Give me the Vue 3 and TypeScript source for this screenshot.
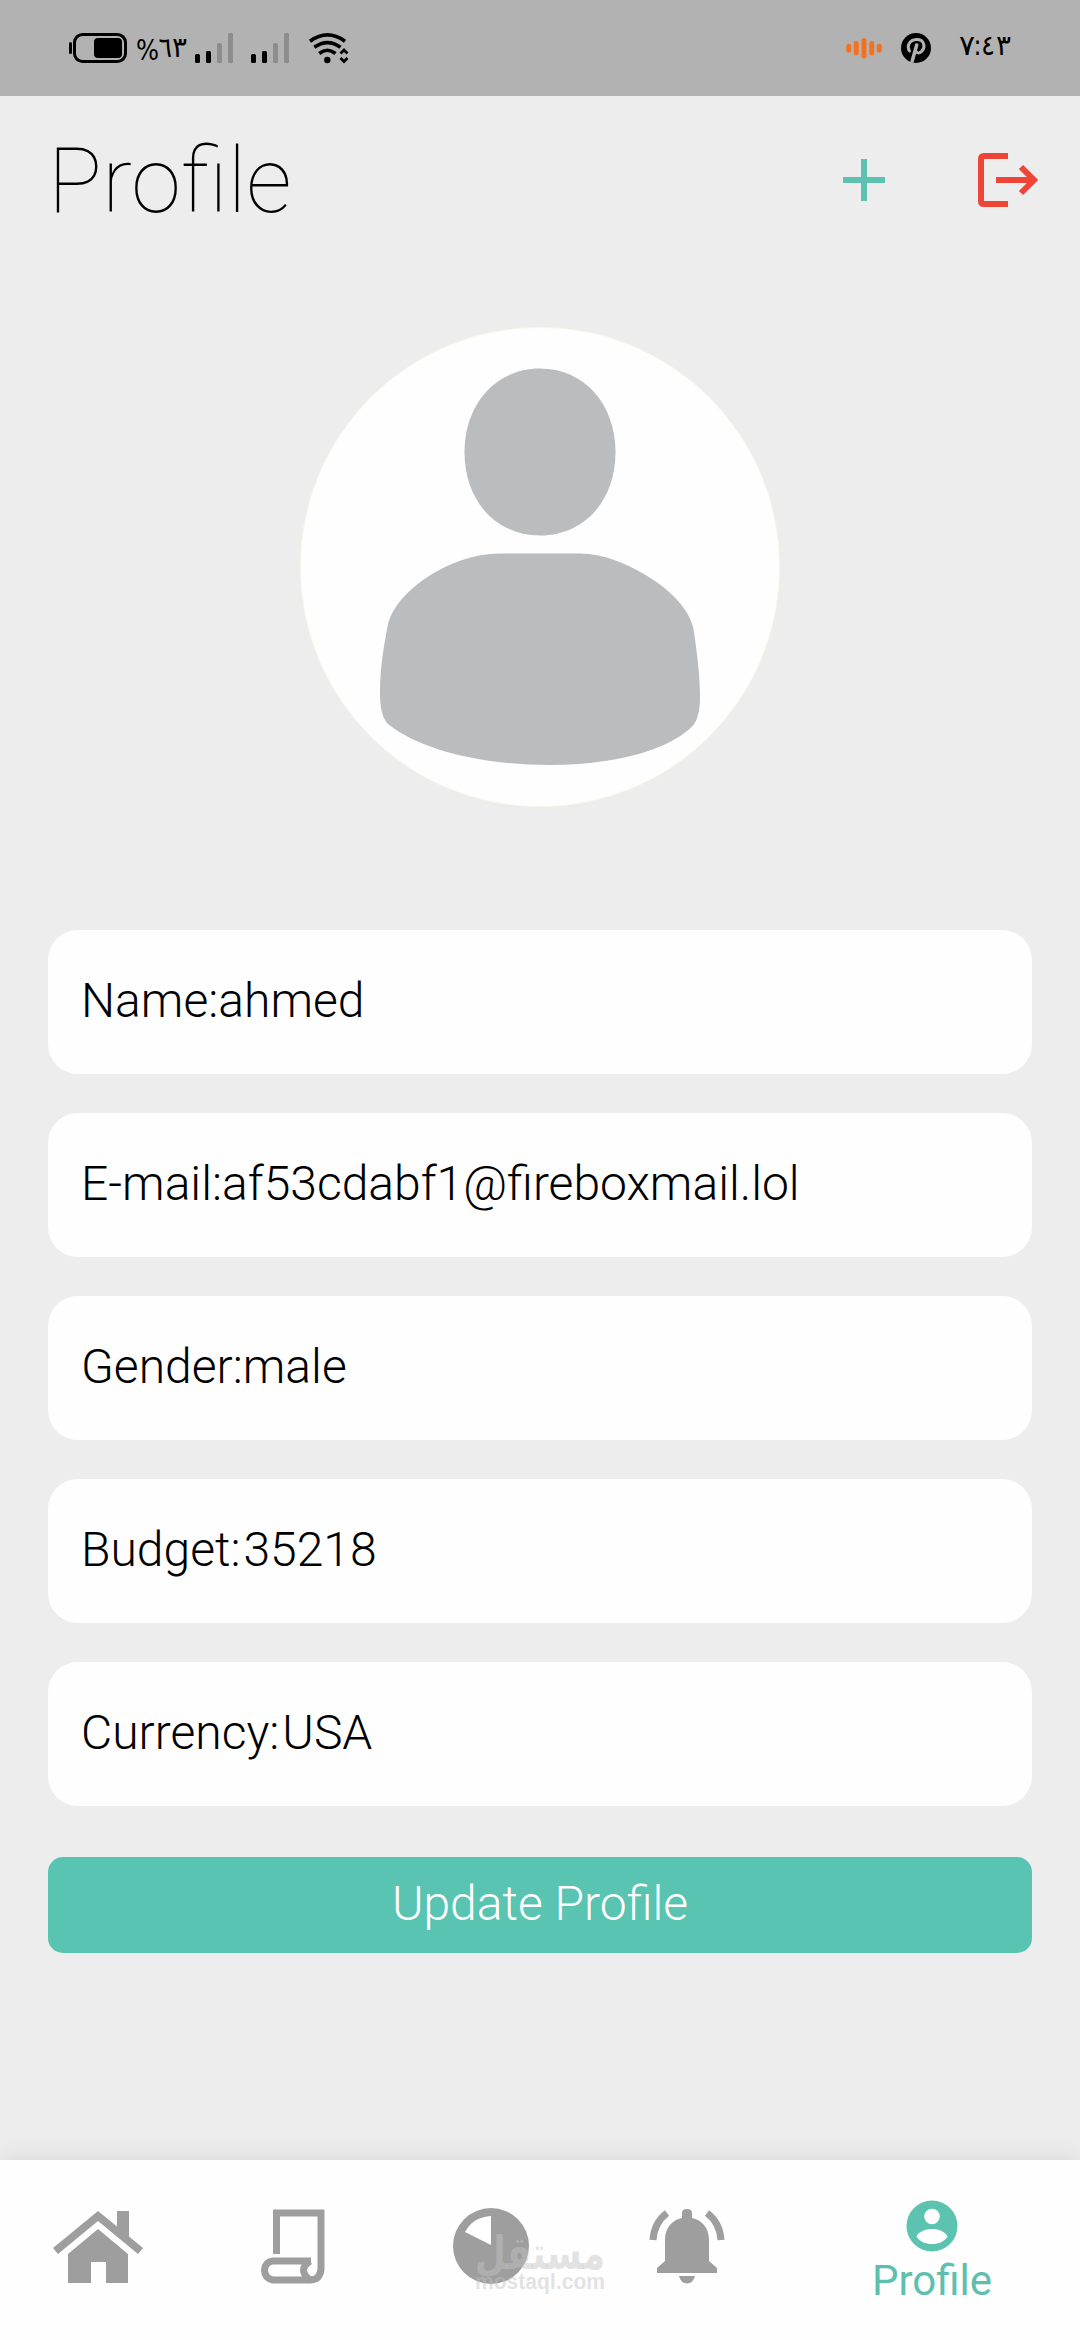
<script setup lang="ts">
interface Field {
  label: string
  value: string
  spaced?: boolean
}

const fields: Field[] = [
  { label: 'Name', value: 'ahmed' },
  { label: 'E-mail', value: 'af53cdabf1@fireboxmail.lol' },
  { label: 'Gender', value: 'male' },
  { label: 'Budget', value: '35218', spaced: true },
  { label: 'Currency', value: 'USA', spaced: true },
]
</script>

<template>
  <div class="screen">
    <header class="status">
      <div class="status-left">
        <svg class="battery" width="58" height="30" viewBox="0 0 58 30">
          <path d="M1.5 10.5V19.5" stroke="#000" stroke-width="3" stroke-linecap="round" />
          <rect x="5.5" y="1.5" width="51" height="27" rx="8" fill="none" stroke="#000" stroke-width="3" />
          <rect x="25" y="5" width="28" height="20" rx="4" />
        </svg>
        <svg class="percent" width="50" height="44" viewBox="0 -7 50 44">
          <text class="digits" x="-1" y="27" font-size="28" textLength="23" lengthAdjust="spacingAndGlyphs">%</text>
          <text class="digits" x="21.500" y="23.500" font-size="28" textLength="13.500" lengthAdjust="spacingAndGlyphs">٦</text>
          <text class="digits" x="35" y="23.500" font-size="28" textLength="15" lengthAdjust="spacingAndGlyphs">٣</text>
        </svg>
        <svg v-for="n in 2" :key="n" class="signal" width="38" height="30" viewBox="0 0 38 30">
          <rect x="0" y="21" width="5" height="9" rx="1.5" />
          <rect x="11" y="18" width="5" height="12" rx="1.5" />
          <rect x="22" y="10" width="5" height="20" rx="1.5" fill="#8d8d8d" />
          <rect x="33" y="0" width="5" height="30" rx="1.5" fill="#8d8d8d" />
        </svg>
        <svg class="wifi" width="40" height="30" viewBox="0 0 40 30">
          <g fill="none" stroke="#000" stroke-width="3.6">
            <path d="M1 8.2Q18.500 -4.400 36 8.200" />
            <path d="M5.300 14.300Q18.500 4.800 31.500 14.300" />
            <path d="M10.200 20.500Q18.300 14 26.500 20.500" />
            <path d="M31.500 20.500L35 17L38.500 20.500M31.500 25L35 28.500L38.500 25" stroke-width="2.700" />
          </g>
          <circle cx="18.300" cy="27" r="3.200" />
        </svg>
      </div>
      <div class="status-right">
        <svg class="sound" width="36" height="22" viewBox="0 0 36 22">
          <g stroke="#f4711f" stroke-width="5" stroke-linecap="round">
            <path d="M2.700 9.300V13.200M10.300 6.500V16M18 3.500V19M25.700 6.500V16M33.300 9.300V13.200" />
          </g>
        </svg>
        <svg class="pin" width="30" height="30" viewBox="0 0 30 30">
          <circle cx="15" cy="15" r="15" />
          <g fill="none" stroke="#b2b2b2" stroke-linecap="round">
            <path d="M8.500 18C5.500 13.500 8 6.800 15.500 6.500C23.500 6.200 24.500 14 21 18C18.500 21 15.500 20 14.500 18" stroke-width="3" />
            <path d="M15.700 12L11.200 28" stroke-width="3.500" />
          </g>
        </svg>
        <svg class="time" width="52" height="44" viewBox="0 -7 52 44">
          <text class="digits" x="-1" y="21.500" font-size="28" textLength="16" lengthAdjust="spacingAndGlyphs">٧</text>
          <text class="digits" x="13.500" y="21.500" font-size="28" textLength="8" lengthAdjust="spacingAndGlyphs">:</text>
          <text class="digits" x="21" y="21.500" font-size="28" textLength="14" lengthAdjust="spacingAndGlyphs">٤</text>
          <text class="digits" x="36" y="21.500" font-size="28" textLength="15" lengthAdjust="spacingAndGlyphs">٣</text>
        </svg>
      </div>
    </header>

    <div class="titlebar">
      <h1>Profile</h1>
      <svg class="plus" width="42" height="42" viewBox="0 0 42 42">
        <path d="M0 21H42M21 0V42" stroke="#5bc3b0" stroke-width="6" />
      </svg>
      <svg class="logout" width="60" height="54" viewBox="0 0 60 54">
        <g fill="none" stroke="#ef4538" stroke-width="6">
          <path d="M30 3H6Q3 3 3 6V48Q3 51 6 51H30" />
          <path d="M18 27H55M43 14L56 27L43 40" />
        </g>
      </svg>
    </div>

    <main>
      <svg class="avatar" width="480" height="480" viewBox="0 0 480 480">
        <circle cx="240" cy="240" r="239.600" fill="#fefefe" stroke="#faf6e5" stroke-width=".8" />
        <g fill="#bbbcbe">
          <path d="M240 41.500C284 41.500 315.500 77 315.500 125C315.500 174 284 208.500 240 208.500C196 208.500 164.500 174 164.500 125C164.500 77 196 41.500 240 41.500Z" />
          <path d="M200 226.500H280C303 226.500 325 236 344 247C370 262 390 283 393.500 302C398 332 400 352 400 370C400 385 397 393 393.500 398C370 423 315 438 250 438C180 438 118 422 87.500 396.500C82 390 80 380 80 366C80 340 84 318 88 297C92 281 106 265 123 253C147 236 174 226.500 200 226.500Z" />
        </g>
      </svg>
      <div class="fields">
        <div v-for="f in fields" :key="f.label" class="field">{{ f.label }}:<span :class="{ spaced: f.spaced }">{{ f.value }}</span></div>
      </div>
      <button class="update" type="button">Update Profile</button>
    </main>

    <nav>
      <svg class="home" width="90" height="72" viewBox="0 0 90 72">
        <g fill="#9e9e9e">
          <path d="M45 0L64 15.500V0H76V25.500L90 37L85 43L45 10L5 43L0 37Z" />
          <path d="M45 18L75 43V72H53V51H38V72H15V43Z" />
        </g>
      </svg>
      <svg class="scroll" width="66" height="78" viewBox="0 0 66 78">
        <g fill="none" stroke="#9e9e9e" stroke-width="7">
          <path d="M16.500 46V5H61V61Q60 72 50 72H13Q4.500 70 4.500 62Q5 54 13 53H51" />
          <path d="M50 53Q37 62 50 72" />
        </g>
      </svg>
      <div class="chart">
        <svg width="76" height="76" viewBox="0 0 76 76">
          <circle cx="38" cy="38" r="38" fill="#9e9e9e" />
          <path d="M38 8V37L12 24Q20 9 38 8Z" fill="#fff" />
        </svg>
        <svg class="watermark" width="134" height="80" viewBox="0 -14 134 80">
          <text class="brand" x="2" y="37" font-size="46" textLength="130" lengthAdjust="spacingAndGlyphs">مستقل</text>
          <text class="domain" x="2" y="57" font-size="22" textLength="130" lengthAdjust="spacingAndGlyphs">mostaql.com</text>
        </svg>
      </div>
      <svg class="bell" width="78" height="75" viewBox="0 0 78 75">
        <g fill="#9e9e9e">
          <path d="M34 9V4Q34 0 39 0T44 4V9C54 11 61 19 61 31V52L69 59V64H9V59L17 52V31C17 19 24 11 34 9Z" />
          <path d="M31 67H47Q45 74.500 39 74.500T31 67Z" />
        </g>
        <path d="M19 4Q6 14 5 31M59 4Q72 14 73 31" fill="none" stroke="#9e9e9e" stroke-width="7" />
      </svg>
      <div class="active">
        <svg width="52" height="52" viewBox="0 0 52 52">
          <circle cx="26" cy="26" r="25.500" fill="#5bc3b0" />
          <g fill="#fff">
            <circle cx="26" cy="16.500" r="7.800" />
            <path d="M10.500 36.500C15 26.500 37 26.500 41.500 36.500C36 46.500 16 46.500 10.500 36.500Z" />
          </g>
        </svg>
        <span>Profile</span>
      </div>
    </nav>
  </div>
</template>

<style>
body {
  background: #ececec;
}
</style>

<style scoped>
.screen {
  width: 1080px;
  height: 2340px;
  display: flex;
  flex-direction: column;
  overflow: hidden;
  background: #ededed;
  font-family: Roboto, 'Liberation Sans', sans-serif;
  color: #000;
}
svg {
  display: block;
  flex: none;
  overflow: visible;
}
.status {
  height: 96px;
  flex: none;
  box-sizing: border-box;
  background: #b2b2b2;
  display: flex;
  justify-content: space-between;
  padding: 0 68px 0 69px;
}
.status-left,
.status-right {
  display: flex;
  align-items: center;
}
.digits {
  font-family: 'DejaVu Sans', sans-serif;
}
.percent {
  margin-left: 10px;
}
.signal {
  margin-left: 8px;
}
.signal + .signal {
  margin-left: 18px;
}
.wifi {
  margin-left: 20px;
}
.pin {
  margin-left: 19px;
}
.time {
  margin-left: 29px;
}
.titlebar {
  height: 168px;
  flex: none;
  display: flex;
  align-items: center;
  padding: 0 42px 0 48px;
}
h1 {
  margin: 0 auto 0 0;
  padding-top: 3px;
  font-size: 90px;
  line-height: 106px;
  font-weight: 100;
}
.logout {
  margin-left: 93px;
}
main {
  flex: 1;
  display: flex;
  flex-direction: column;
  align-items: center;
  padding: 63px 48px 0;
}
.fields {
  width: 100%;
  margin-top: 123px;
  display: flex;
  flex-direction: column;
  gap: 39px;
}
.field {
  height: 144px;
  box-sizing: border-box;
  padding: 0 33px;
  border-radius: 30px;
  background: #fefefe;
  font-size: 48px;
  line-height: 142px;
  font-weight: 300;
}
.spaced {
  margin-left: 3px;
}
.update {
  width: 100%;
  height: 96px;
  margin-top: 51px;
  padding: 0 0 3px;
  border: 0;
  border-radius: 15px;
  background: #58c4b1;
  color: #fff;
  font-family: inherit;
  font-size: 48px;
  font-weight: 300;
}
nav {
  height: 180px;
  flex: none;
  box-sizing: border-box;
  display: flex;
  align-items: flex-start;
  background: #fefefe;
  box-shadow: 0 0 24px rgba(0, 0, 0, 0.1);
  padding: 40px 0 0 53px;
}
.home {
  margin-top: 11px;
}
.scroll {
  margin: 8px 0 0 117px;
}
.chart {
  position: relative;
  margin: 8px 0 0 127px;
}
.watermark {
  position: absolute;
  left: 20px;
  top: 10px;
}
.watermark text {
  fill: rgba(196, 196, 196, 0.48);
  font-weight: 700;
}
.brand {
  font-family: 'DejaVu Sans', sans-serif;
  direction: ltr;
}
.domain {
  font-family: 'Liberation Sans', sans-serif;
}
.bell {
  margin: 9px 0 0 119px;
}
.active {
  width: 140px;
  margin-left: 136px;
  display: flex;
  flex-direction: column;
  align-items: center;
  color: #5fbfae;
  font-size: 42px;
  line-height: 50px;
}
.active span {
  margin-top: 4px;
}
</style>
